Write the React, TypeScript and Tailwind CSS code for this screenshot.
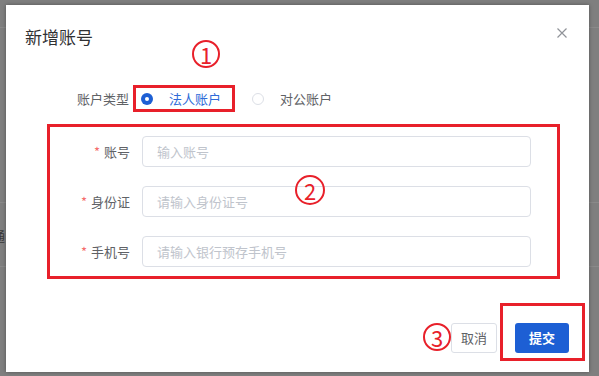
import React from "react";

const RED = "border-[#e8202a]";

function Mark({ n, className }: { n: string; className: string }) {
  // red circled step number drawn over the dialog
  return (
    <div
      className={`absolute flex items-center justify-center rounded-full border-2 border-[#e8202a] text-[#e8202a] text-[22px] leading-none ${className}`}
    >
      {n}
    </div>
  );
}

function Field({ label, placeholder }: { label: string; placeholder: string }) {
  return (
    <div className="flex items-center h-[31px]">
      <div className="w-[80px] text-right text-[13px] text-[#606266]">
        <span className="text-[#f56c6c] mr-[4px]">*</span>
        {label}
      </div>
      <div className="ml-[12px] w-[389px] h-[31px] border border-[#dcdfe6] rounded-[4px] px-[14px] flex items-center text-[13px] text-[#c0c4cc]">
        {placeholder}
      </div>
    </div>
  );
}

export default function App() {
  return (
    <div className="relative w-[599px] h-[376px] overflow-hidden bg-[#7f7f7f] font-['Noto_Sans_CJK_SC','Noto_Sans',sans-serif]">
      {/* page behind the mask */}
      <div className="absolute left-0 right-0 top-[27px] h-px bg-[#8a8a8a]" />
      <div className="absolute left-0 right-0 top-[202px] h-px bg-[#8a8a8a]" />
      <div className="absolute left-0 right-0 top-[266px] h-px bg-[#8a8a8a]" />
      <span className="absolute left-[-8px] top-[226px] text-[13px] text-[#3a3a3a]">通</span>

      <div className="relative pt-[5px] pl-[6px]">
        <div className="relative w-[583px] h-[367px] bg-white shadow-[0_0_4px_rgba(0,0,0,0.35)]">
          {/* Header */}
          <div className="flex justify-between items-start pt-[21px] pl-[19px] pr-[22px]">
            <h1 className="h-[22px] leading-[22px] text-[17px] text-[#303133]">新增账号</h1>
            <svg width="10" height="10" viewBox="0 0 10 10" className="mt-[2px]">
              <path d="M0.5 0.5L9.5 9.5M9.5 0.5L0.5 9.5" stroke="#909399" strokeWidth="1.2" />
            </svg>
          </div>

          {/* Account type */}
          <div className="mt-[37px] flex items-center h-[27px]">
            <div className="w-[123px] text-right text-[13px] text-[#606266]">账户类型</div>
            <div className={`ml-[4px] h-[27px] border-[3px] ${RED} flex items-center pl-[5px] pr-[11px]`}>
              <span className="w-[12px] h-[12px] rounded-full bg-[#1d5fd4] flex items-center justify-center">
                <span className="w-[4px] h-[4px] rounded-full bg-white" />
              </span>
              <span className="ml-[16px] text-[13px] text-[#2f6bd8]">法人账户</span>
            </div>
            <span className="ml-[17px] w-[12px] h-[12px] rounded-full border border-[#dcdfe6]" />
            <span className="ml-[16px] text-[13px] text-[#606266]">对公账户</span>
          </div>

          {/* Fields */}
          <div className={`mt-[12px] ml-[41px] w-[513px] border-[3px] ${RED} pt-[9px] pb-[9px] flex flex-col gap-[19px]`}>
            <Field label="账号" placeholder="输入账号" />
            <Field label="身份证" placeholder="请输入身份证号" />
            <Field label="手机号" placeholder="请输入银行预存手机号" />
          </div>

          {/* Footer */}
          <div className="mt-[24px] flex justify-end items-end pr-[4px]">
            <button className="mb-[8px] mr-[3px] w-[46px] h-[30px] border border-[#dcdfe6] rounded-[3px] bg-white text-[13px] text-[#606266]">
              取消
            </button>
            <div className={`border-[3px] ${RED} pt-[17px] pb-[5px] pl-[12px] pr-[13px]`}>
              <button className="w-[54px] h-[30px] rounded-[3px] bg-[#1d5fd4] text-[13px] font-semibold text-white">
                提交
              </button>
            </div>
          </div>

          <Mark n="1" className="left-[186px] top-[35px] w-[28px] h-[28px]" />
          <Mark n="2" className="left-[289px] top-[170px] w-[30px] h-[30px]" />
          <Mark n="3" className="left-[417px] top-[318px] w-[28px] h-[28px]" />
        </div>
      </div>
    </div>
  );
}
